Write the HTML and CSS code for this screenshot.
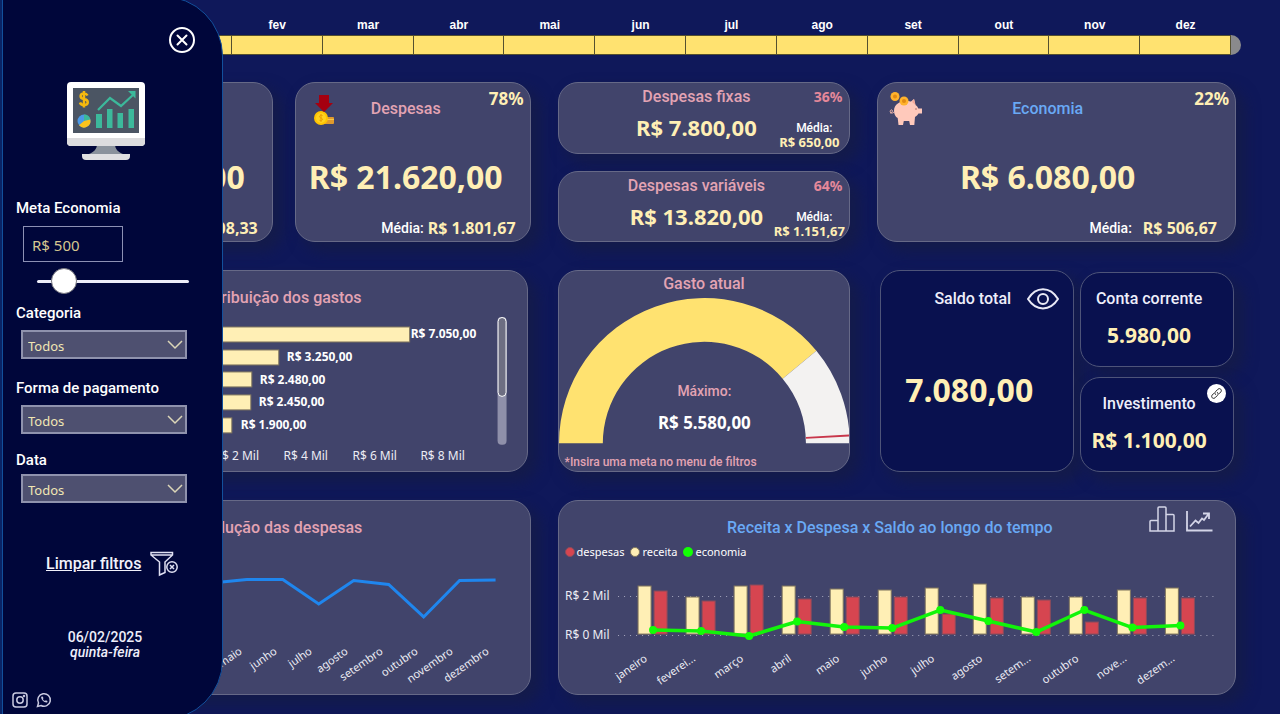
FILE: index.html
```html
<!DOCTYPE html>
<html lang="pt-BR">
<head>
<meta charset="utf-8">
<meta name="viewport" content="width=device-width, initial-scale=1">
<title>Controle financeiro</title>
<link rel="stylesheet" href="styles.css">
</head>
<body>
<div class="page">
  <header class="timeline">
    <ol class="months">
      <li><span>jan</span></li><li><span>fev</span></li><li><span>mar</span></li><li><span>abr</span></li>
      <li><span>mai</span></li><li><span>jun</span></li><li><span>jul</span></li><li><span>ago</span></li>
      <li><span>set</span></li><li><span>out</span></li><li><span>nov</span></li><li><span>dez</span></li>
    </ol>
    <div class="timeline-cap"></div>
  </header>

  <main class="board">
    <div class="pair">
      <section class="card kpi">
        <div class="kpi-head"><span></span><h2 class="title title-blue">Receita</h2></div>
        <p class="kpi-value">R$ 27.700,00</p>
        <p class="kpi-foot"><span>Média:</span><strong>R$ 2.308,33</strong></p>
      </section>
      <section class="card kpi">
        <div class="kpi-head">
          <svg class="kpi-icon" width="24" height="34" viewBox="0 0 24 34" aria-hidden="true">
            <rect x="10" y="25" width="12" height="7" rx="1" fill="#e09a2c"/>
            <rect x="10" y="27" width="12" height="1" fill="#f7c948"/>
            <circle cx="9" cy="26" r="7" fill="#ffc400"/>
            <circle cx="9" cy="26" r="5" fill="#ffd21f"/>
            <path d="M10.500 23.500c-3-1-4 1.800-1.500 2.500s1.500 3.300-1.500 2.300M9 22v8" stroke="#eb9d00" fill="none"/>
            <path d="M7 3h10v8h4l-9 9-9-9h4z" fill="#a50010"/>
          </svg>
          <h2 class="title">Despesas</h2>
        </div>
        <span class="kpi-share">78%</span>
        <p class="kpi-value">R$ 21.620,00</p>
        <p class="kpi-foot"><span>Média:</span><strong>R$ 1.801,67</strong></p>
      </section>
    </div>

    <div class="stack">
      <section class="card mini">
        <div class="mini-main"><h2 class="title">Despesas fixas</h2><p class="mini-value">R$ 7.800,00</p></div>
        <div class="mini-side"><span class="mini-share">36%</span><span class="mini-label">Média:</span><strong>R$ 650,00</strong></div>
      </section>
      <section class="card mini">
        <div class="mini-main"><h2 class="title">Despesas variáveis</h2><p class="mini-value">R$ 13.820,00</p></div>
        <div class="mini-side"><span class="mini-share">64%</span><span class="mini-label">Média:</span><strong>R$ 1.151,67</strong></div>
      </section>
    </div>

    <section class="card kpi kpi-wide">
      <div class="kpi-head">
        <svg class="kpi-icon" width="36" height="36" viewBox="0 0 36 36" aria-hidden="true">
          <path d="M6 21c-3 3-5-1-3-2s2 3-1 3" stroke="#f5b9aa" fill="none"/>
          <path d="M6 20c0-7 6-10 13-10 2 0 3 .3 4 .6L26 8l1.500 6c1.500 1 2.200 2 2.800 3.500H34v5h-3.500c-.8 1.500-2 2.700-3.500 3.500l-.7 8H22l-.8-4h-5.400l-.8 4h-4.500l-.8-7C7.500 26 6 23 6 20z" fill="#ffc9bb"/>
          <path d="M24 11l2-3 1.500 6z" fill="#f5aa99"/>
          <circle cx="28" cy="18" r="1" fill="#c98f86"/>
          <circle cx="7" cy="5.500" r="4.500" fill="#ffb32c"/><circle cx="7" cy="5.500" r="2" fill="#e18a13"/>
          <circle cx="16" cy="10" r="4.500" fill="#ffb32c"/><circle cx="16" cy="10" r="2" fill="#e18a13"/>
        </svg>
        <h2 class="title title-blue">Economia</h2>
      </div>
      <span class="kpi-share">22%</span>
      <p class="kpi-value">R$ 6.080,00</p>
      <p class="kpi-foot"><span>Média:</span><strong>R$ 506,67</strong></p>
    </section>

    <section class="card chart chart-left">
      <h2 class="title chart-title">Distribuição dos gastos</h2>
      <svg class="plot" viewBox="38 311 489 160" role="img" aria-label="Distribuição dos gastos">
        <g class="bar-cream">
          <rect x="167" y="327" width="243" height="15"/>
          <rect x="167" y="350" width="112" height="15"/>
          <rect x="167" y="372" width="85" height="15"/>
          <rect x="167" y="395" width="84" height="15"/>
          <rect x="167" y="418" width="65" height="15"/>
        </g>
        <g class="data-label">
          <text x="411" y="338">R$ 7.050,00</text>
          <text x="287" y="361">R$ 3.250,00</text>
          <text x="260" y="384">R$ 2.480,00</text>
          <text x="259" y="406">R$ 2.450,00</text>
          <text x="241" y="429">R$ 1.900,00</text>
        </g>
        <g class="axis axis-mid">
          <text x="237" y="460">R$ 2 Mil</text>
          <text x="306" y="460">R$ 4 Mil</text>
          <text x="375" y="460">R$ 6 Mil</text>
          <text x="443" y="460">R$ 8 Mil</text>
        </g>
        <rect x="498" y="317" width="9" height="128" rx="4" fill="#8f90aa"/>
        <rect x="498.500" y="317.500" width="8" height="79" rx="4" fill="#6d6e82" stroke="#fff"/>
      </svg>
    </section>

    <section class="card chart">
      <h2 class="title gauge-title">Gasto atual</h2>
      <svg class="plot" viewBox="558 297 292 150" role="img" aria-label="Gasto atual">
        <path d="M558 444A146 146 0 0 1 816.500 351L782.600 379A102 102 0 0 0 602 444z" fill="#ffe270"/>
        <path d="M816.500 351A146 146 0 0 1 850 444H806A102 102 0 0 0 782.600 379z" fill="#f3f2f1"/>
        <path d="M806 438.500L849.500 436" stroke="#c8374b" stroke-width="2"/>
        <text class="gauge-label" x="704" y="396">Máximo:</text>
        <text class="gauge-value" x="704" y="430">R$ 5.580,00</text>
      </svg>
      <p class="gauge-note">*Insira uma meta no menu de filtros</p>
    </section>

    <div class="balances">
      <section class="card dark">
        <div class="balance-head">
          <h2 class="title title-white">Saldo total</h2>
          <button class="icon-btn" type="button" aria-label="Mostrar ou ocultar saldo">
            <svg width="32" height="22" viewBox="0 0 32 22" fill="none" stroke="#e9e9f6" stroke-width="2"><path d="M1 11C9-2 23-2 31 11 23 23.500 9 23.500 1 11z"/><circle cx="16" cy="11" r="5"/></svg>
          </button>
        </div>
        <p class="kpi-value balance-total">7.080,00</p>
      </section>
      <div class="accounts">
        <section class="card dark account">
          <h2 class="title title-white">Conta corrente</h2>
          <p class="account-value">5.980,00</p>
        </section>
        <section class="card dark account">
          <h2 class="title title-white">Investimento</h2>
          <p class="account-value">R$ 1.100,00</p>
          <a class="link-badge" href="#investimento" aria-label="Abrir investimento">
            <svg width="13" height="13" viewBox="0 0 13 13" fill="none" stroke="#222" stroke-linecap="round"><path d="M5.500 7.500c-1-1-.8-2 0-2.800L8 2.200c1.800-1.700 4.500.8 2.800 2.700L9.300 6.500M7.500 5.500c1 1 .8 2 0 2.800L5 10.800C3.200 12.500.5 10 2.200 8.100L3.700 6.500"/></svg>
          </a>
        </section>
      </div>
    </div>

    <section class="card chart">
      <h2 class="title chart-title">Evolução das despesas</h2>
      <svg class="plot" viewBox="38 541 492 152" role="img" aria-label="Evolução das despesas">
        <polyline points="176,587 212,583 247,579.500 283,579.500 319,604 354,580.500 389,584.500 424,617 460,580.500 496,580" fill="none" stroke="#1f86ee" stroke-width="3"/>
        <g class="axis axis-tilted">
          <text transform="translate(243 653) rotate(-35)">maio</text>
          <text transform="translate(278 653) rotate(-35)">junho</text>
          <text transform="translate(313 653) rotate(-35)">julho</text>
          <text transform="translate(349 653) rotate(-35)">agosto</text>
          <text transform="translate(384 653) rotate(-35)">setembro</text>
          <text transform="translate(419 653) rotate(-35)">outubro</text>
          <text transform="translate(454 653) rotate(-35)">novembro</text>
          <text transform="translate(490 653) rotate(-35)">dezembro</text>
        </g>
      </svg>
    </section>

    <section class="card chart chart-wide">
      <div class="wide-head">
        <h2 class="title title-blue">Receita x Despesa x Saldo ao longo do tempo</h2>
        <div class="wide-tools">
          <button class="icon-btn" type="button" aria-label="Ver em colunas">
            <svg width="26" height="26" viewBox="0 0 26 26" fill="none" stroke="#d4d5e8" stroke-width="1.500"><path d="M1 25V15.500q0-1 1-1h7V25zM9 25V2q0-1 1-1h6q1 0 1 1v23zM17 8.500h7q1 0 1 1V25h-8z"/></svg>
          </button>
          <button class="icon-btn" type="button" aria-label="Ver em linhas">
            <svg width="27" height="22" viewBox="0 0 27 22" fill="none" stroke="#d4d5e8" stroke-width="1.800"><path d="M1 1v19.500h25.500M4 16.500l5.500-6 3 2.500 3.500-4.500 2 1.500L22.500 4M17 3.500h6V9"/></svg>
          </button>
        </div>
      </div>
      <ul class="legend">
        <li><i class="dot dot-red"></i>despesas</li>
        <li><i class="dot dot-cream"></i>receita</li>
        <li><i class="dot dot-green"></i>economia</li>
      </ul>
      <svg class="plot" viewBox="559 563 676 128" role="img" aria-label="Receita, despesa e saldo por mês">
        <path d="M618 596.500H1215M618 635.500H1215" stroke="#a5a6bd" stroke-dasharray="1 5"/>
        <g class="axis">
          <text x="565" y="600">R$ 2 Mil</text>
          <text x="565" y="639">R$ 0 Mil</text>
        </g>
        <g class="bar-cream">
          <rect x="638" y="586" width="13" height="48"/><rect x="686" y="597" width="13" height="37"/>
          <rect x="734" y="586" width="13" height="48"/><rect x="782" y="586" width="13" height="48"/>
          <rect x="830" y="589" width="13" height="45"/><rect x="878" y="590" width="13" height="44"/>
          <rect x="925" y="588" width="13" height="46"/><rect x="973" y="584" width="13" height="50"/>
          <rect x="1021" y="597" width="13" height="37"/><rect x="1069" y="597" width="13" height="37"/>
          <rect x="1117" y="590" width="13" height="44"/><rect x="1165" y="588" width="13" height="46"/>
        </g>
        <g class="bar-red">
          <rect x="654" y="591" width="13" height="43"/><rect x="702" y="601" width="13" height="33"/>
          <rect x="750" y="585" width="13" height="49"/><rect x="798" y="599" width="13" height="35"/>
          <rect x="846" y="597" width="13" height="37"/><rect x="894" y="597" width="13" height="37"/>
          <rect x="942" y="614" width="13" height="20"/><rect x="990" y="598" width="13" height="36"/>
          <rect x="1037" y="600" width="13" height="34"/><rect x="1085" y="622" width="13" height="12"/>
          <rect x="1133" y="598" width="13" height="36"/><rect x="1181" y="598" width="13" height="36"/>
        </g>
        <polyline points="653,630 701,631 749,636 797,621.500 844,627 892,628 940,610 988,621 1036,632 1084,610 1132,627.500 1180,625.500" fill="none" stroke="#12f40a" stroke-width="3.500" stroke-linejoin="round"/>
        <g fill="#12ff05">
          <circle cx="653" cy="630" r="4"/><circle cx="701" cy="631" r="4"/><circle cx="749" cy="636" r="4"/>
          <circle cx="797" cy="621.500" r="4"/><circle cx="844" cy="627" r="4"/><circle cx="892" cy="628" r="4"/>
          <circle cx="940" cy="610" r="4"/><circle cx="988" cy="621" r="4"/><circle cx="1036" cy="632" r="4"/>
          <circle cx="1084" cy="610" r="4"/><circle cx="1132" cy="627.500" r="4"/><circle cx="1180" cy="625.500" r="4"/>
        </g>
        <g class="axis axis-tilted">
          <text transform="translate(648 660) rotate(-35)">janeiro</text>
          <text transform="translate(696 660) rotate(-35)">feverei...</text>
          <text transform="translate(744 660) rotate(-35)">março</text>
          <text transform="translate(792 660) rotate(-35)">abril</text>
          <text transform="translate(840 660) rotate(-35)">maio</text>
          <text transform="translate(888 660) rotate(-35)">junho</text>
          <text transform="translate(935 660) rotate(-35)">julho</text>
          <text transform="translate(983 660) rotate(-35)">agosto</text>
          <text transform="translate(1031 660) rotate(-35)">setem...</text>
          <text transform="translate(1079 660) rotate(-35)">outubro</text>
          <text transform="translate(1127 660) rotate(-35)">nove...</text>
          <text transform="translate(1175 660) rotate(-35)">dezem...</text>
        </g>
      </svg>
    </section>
  </main>

  <aside class="drawer">
    <button class="icon-btn drawer-close" type="button" aria-label="Fechar filtros">
      <svg width="28" height="28" viewBox="0 0 28 28" fill="none" stroke="#fff" stroke-width="2" stroke-linecap="round"><circle cx="14" cy="14" r="12"/><path d="M9.500 9.500l9 9M18.500 9.500l-9 9"/></svg>
    </button>
    <svg class="drawer-logo" width="78" height="78" viewBox="0 0 78 78" aria-hidden="true">
      <path d="M30 62h18c0 5 3 8 8 10H22c5-2 8-5 8-10z" fill="#8a929c"/>
      <path d="M15 72h48v2q0 4-4 4H19q-4 0-4-4z" fill="#dfdfe1"/>
      <rect x="0" y="0" width="78" height="64" rx="4" fill="#fff"/>
      <path d="M0 56h78v4q0 4-4 4H4q-4 0-4-4z" fill="#dcdcde"/>
      <rect x="6" y="6" width="66" height="45" fill="#4b5563"/>
      <path d="M20.500 13.500q-1-2-3.500-2c-4.500 0-4.500 5 0 5.500 5 .6 5 6 0 6q-3.200 0-4-2.500M17 9v16.500" stroke="#f6b90e" stroke-width="2.500" fill="none"/>
      <circle cx="17" cy="39" r="6.500" fill="#4b9ae8"/>
      <path d="M17 39V32.500A6.500 6.500 0 0 1 23.300 37.500z" fill="#3cb99b"/>
      <path d="M17 39l6.300-1.500A6.500 6.500 0 0 1 12 43.200z" fill="#fbc31c"/>
      <path d="M31 28l12-12 11 8 13-12" stroke="#3cb99b" stroke-width="2.200" fill="none"/>
      <path d="M61 9h7.500v7.500z" fill="#3cb99b"/>
      <path d="M29 32h6v14h-6zM40 27h5.500v19H40zM50.500 31h5.500v15h-5.500zM61.500 27h5.500v19h-5.500z" fill="#3cb99b"/>
    </svg>

    <div class="field field-goal">
      <label for="goal">Meta Economia</label>
      <input class="goal" id="goal" type="text" value="R$ 500">
      <input class="slider" type="range" min="0" max="4500" step="100" value="500" aria-label="Meta de economia">
    </div>
    <div class="field field-category">
      <label for="category">Categoria</label>
      <div class="select-wrap">
        <select id="category"><option>Todos</option></select>
        <svg width="16" height="10" viewBox="0 0 16 10" fill="none" stroke="#dcd6b8" stroke-width="1.500"><path d="M1 1l7 7 7-7"/></svg>
      </div>
    </div>
    <div class="field">
      <label for="payment">Forma de pagamento</label>
      <div class="select-wrap">
        <select id="payment"><option>Todos</option></select>
        <svg width="16" height="10" viewBox="0 0 16 10" fill="none" stroke="#dcd6b8" stroke-width="1.500"><path d="M1 1l7 7 7-7"/></svg>
      </div>
    </div>
    <div class="field field-date">
      <label for="date">Data</label>
      <div class="select-wrap">
        <select id="date"><option>Todos</option></select>
        <svg width="16" height="10" viewBox="0 0 16 10" fill="none" stroke="#dcd6b8" stroke-width="1.500"><path d="M1 1l7 7 7-7"/></svg>
      </div>
    </div>

    <a class="clear" href="#limpar">
      <span>Limpar filtros</span>
      <svg width="28" height="26" viewBox="0 0 28 26" fill="none" stroke="#dfe0f2" stroke-width="1.500"><path d="M1 1.500h21.500v2.500L15 11v10.500L9.500 24V11L1 4zM1 4h21.500"/><circle cx="22" cy="16" r="5.200" fill="#00063a"/><path d="M20 14l4 4M24 14l-4 4"/></svg>
    </a>
    <p class="today">06/02/2025<br><em>quinta-feira</em></p>

    <nav class="social">
      <a href="#instagram" aria-label="Instagram"><svg width="16" height="16" viewBox="0 0 16 16" fill="none" stroke="#c9cae0" stroke-width="1.500"><rect x="1" y="1" width="14" height="14" rx="3"/><circle cx="8" cy="8" r="3.200"/><circle cx="12" cy="4" r=".5"/></svg></a>
      <a href="#whatsapp" aria-label="WhatsApp"><svg width="16" height="16" viewBox="0 0 16 16" fill="none" stroke="#c9cae0" stroke-width="1.500"><path d="M1.500 14.500l1-3.500A6.300 6.300 0 1 1 5 13.500z"/><path d="M5.200 4.800c-.6 2.500 3.300 6.500 6 5.600l.3-1.300-1.700-.8-.8.8C7.900 8.700 7.200 8 6.800 7l.7-.8-.8-1.700z" fill="#c9cae0" stroke="none"/></svg></a>
    </nav>
  </aside>
</div>
</body>
</html>
```
FILE: styles.css
```css
*, *::before, *::after { box-sizing: border-box; }

body, h2, p, ol, ul { margin: 0; padding: 0; }

ol, ul { list-style: none; }

body {
  background: #0f185a;
  color: #fff;
  font-family: "Noto Sans", "Open Sans", sans-serif;
  font-size: 12px;
}

.page {
  position: relative;
  display: flex;
  flex-direction: column;
  min-height: 100vh;
  overflow: hidden;
}

/* Month timeline */
.timeline {
  display: flex;
  align-items: flex-end;
  padding: 15px 39px 0 141px;
}

.months {
  flex: 1;
  display: grid;
  grid-template-columns: repeat(12, 1fr);
  font: bold 12px/20px "Liberation Sans", Arial, sans-serif;
  text-align: center;
}

.months li::after {
  content: "";
  display: block;
  height: 20px;
  background: #ffe270;
  border: solid #55502f;
  border-width: 1px 1px 1px 0;
}

.timeline-cap {
  width: 10px;
  height: 20px;
  background: #8a8a8c;
  border-radius: 0 10px 10px 0;
}

/* Dashboard grid */
.board {
  flex: 1;
  display: grid;
  grid-template-columns: 494fr 293fr 359fr;
  grid-template-rows: 160fr 202fr 195fr;
  gap: 28px 27px;
  padding: 27px 44px 19px 37px;
}

.pair {
  display: grid;
  grid-template-columns: 1fr 1fr;
  gap: 22px;
}

.stack {
  display: grid;
  grid-template-rows: 1fr 1fr;
  gap: 17px;
}

.card {
  position: relative;
  min-width: 0;
  background: #41446b;
  border: 1px solid #666987;
  border-radius: 20px;
  box-shadow: 8px 8px 14px 2px #141b4b;
}

.title {
  color: #e3a3b3;
  font: 500 16px/20px Roboto, "Noto Sans", sans-serif;
  text-align: center;
}

.title-blue { color: #69a9f5; }
.title-white { color: #eeeefa; }

/* Indicator cards */
.kpi {
  display: flex;
  flex-direction: column;
  padding-right: 14px;
}

.kpi-head {
  display: grid;
  grid-template-columns: 56px 1fr 56px;
  align-items: center;
  height: 52px;
}

.kpi-icon { justify-self: center; }

.kpi-share {
  position: absolute;
  top: 6px;
  right: 6px;
  color: #ffefb5;
  font-size: 17px;
  font-weight: bold;
  line-height: 20px;
}

.kpi-value {
  flex: 1;
  display: flex;
  align-items: center;
  justify-content: center;
  color: #ffefb5;
  font-size: 32px;
  font-weight: bold;
  line-height: 36px;
  white-space: nowrap;
}

.kpi-foot {
  display: flex;
  justify-content: flex-end;
  align-items: center;
  gap: 4px;
  padding-bottom: 4px;
  font: 500 14px/18px Roboto, sans-serif;
}

.kpi-foot strong {
  color: #ffefb5;
  font: bold 16px/18px "Noto Sans", sans-serif;
}

.kpi-wide { padding-right: 18px; }
.kpi-wide .kpi-foot { gap: 11px; }

.mini {
  display: grid;
  grid-template-columns: 1fr 78px;
  padding: 4px 1px 0 64px;
}

.mini-main { text-align: center; }

.mini-value {
  color: #ffefb5;
  font-size: 22px;
  font-weight: bold;
  line-height: 40px;
  white-space: nowrap;
}

.mini-side {
  display: flex;
  flex-direction: column;
  align-items: center;
  font-size: 13px;
  line-height: 14px;
  white-space: nowrap;
}

.mini-side strong { color: #ffefb5; }

.mini-share {
  align-self: flex-end;
  margin-bottom: 14px;
  padding-right: 6px;
  color: #e5889a;
  font-size: 14px;
  font-weight: bold;
  line-height: 20px;
}

.mini-label {
  padding-left: 10px;
  font: 500 12px/14px Roboto, sans-serif;
}

/* Charts */
.chart {
  display: flex;
  flex-direction: column;
}

.chart-left { margin-right: 3px; }
.chart-wide { grid-column: span 2; }

.chart-title {
  height: 40px;
  padding: 17px 10px 0 0;
}

.plot {
  display: block;
  width: 100%;
  font-family: "Noto Sans", sans-serif;
}

.bar-cream { fill: #ffefb5; stroke: #80765f; }
.bar-red { fill: #d64550; stroke: #8a4c5c; }

.data-label {
  fill: #fff;
  font-size: 12px;
  font-weight: bold;
}

.axis {
  fill: #ececf4;
  font-size: 12px;
}

.axis-mid { text-anchor: middle; }

.axis-tilted {
  font-size: 11px;
  text-anchor: end;
}

.gauge-title {
  height: 26px;
  padding-top: 3px;
}

.gauge-label {
  fill: #e3a3b3;
  font: 500 14px Roboto, sans-serif;
  text-anchor: middle;
}

.gauge-value {
  fill: #fff;
  font-size: 17px;
  font-weight: bold;
  text-anchor: middle;
}

.gauge-note {
  margin-top: 8px;
  padding-left: 6px;
  color: #e3a3b3;
  font: 500 12px/16px Roboto, sans-serif;
}

.wide-head {
  display: grid;
  grid-template-columns: 80px 1fr 94px;
  height: 40px;
}

.wide-head .title {
  grid-column: 2;
  padding-top: 17px;
}

.wide-tools {
  display: flex;
  align-items: flex-end;
  gap: 11px;
  padding: 0 0 9px 8px;
}

.legend {
  display: flex;
  gap: 6px;
  padding-left: 6px;
  font-size: 11px;
  line-height: 22px;
}

.legend li {
  display: flex;
  align-items: center;
  gap: 2px;
}

.dot {
  width: 10px;
  height: 10px;
  border-radius: 50%;
}

.dot-red { background: #d64550; border: 1px solid #8a4c5c; }
.dot-cream { background: #ffefb5; border: 1px solid #80765f; }
.dot-green { background: #12ff05; }

/* Balances */
.balances {
  display: grid;
  grid-template-columns: 194fr 154fr;
  gap: 6px;
  padding: 0 2px 0 3px;
}

.dark {
  background: #09114f;
  border-color: #4e5479;
}

.balance-head {
  display: flex;
  align-items: center;
  justify-content: flex-end;
  gap: 16px;
  padding: 17px 14px 0 0;
}

.balance-total {
  padding: 62px 16px 0 0;
}

.accounts {
  display: grid;
  grid-template-rows: 1fr 1fr;
  gap: 10px;
  padding: 2px 0 0;
}

.account {
  padding: 16px 16px 0 0;
  text-align: center;
}

.account-value {
  padding-top: 6px;
  color: #ffefb5;
  font-size: 21px;
  font-weight: bold;
  line-height: 40px;
  white-space: nowrap;
}

.link-badge {
  position: absolute;
  top: 6px;
  right: 7px;
  display: grid;
  place-items: center;
  width: 19px;
  height: 19px;
  background: #fff;
  border-radius: 50%;
}

.icon-btn {
  display: block;
  padding: 0;
  border: 0;
  background: none;
  cursor: pointer;
}

.icon-btn svg { display: block; }

/* Filter drawer laid over the dashboard */
.drawer {
  position: absolute;
  top: -4px;
  bottom: -6px;
  left: 2px;
  width: 221px;
  display: flex;
  flex-direction: column;
  padding: 29px 34px 11px 13px;
  background: #00063a;
  border: 1px solid #12509c;
  border-radius: 0 60px 60px 0;
  box-shadow: -3px 0 0 #0a2466;
}

.drawer-close {
  align-self: flex-end;
  margin-right: -8px;
}

.drawer-logo {
  margin: 28px 0 38px 51px;
}

.field {
  display: flex;
  flex-direction: column;
  margin-bottom: 16px;
}

.field label {
  margin-bottom: 7px;
  font: 500 15px/20px Roboto, sans-serif;
}

.goal {
  width: 100px;
  height: 36px;
  margin: 1px 0 5px 7px;
  padding: 2px 8px 0;
  background: transparent;
  border: 1px solid #8c90b4;
  color: #d6c690;
  font: 15px "Noto Sans", sans-serif;
}

.slider {
  appearance: none;
  width: 152px;
  height: 28px;
  margin: 0 0 0 21px;
  background: transparent;
}

.slider::-webkit-slider-runnable-track {
  height: 3px;
  background: #eeeefa;
  border-radius: 2px;
}

.slider::-webkit-slider-thumb {
  appearance: none;
  width: 26px;
  height: 26px;
  margin-top: -12px;
  background: #fff;
  border: 1px solid #77777f;
  border-radius: 50%;
}

.select-wrap {
  position: relative;
  width: 166px;
  margin-left: 5px;
}

.select-wrap select {
  appearance: none;
  display: block;
  width: 100%;
  height: 29px;
  padding: 2px 24px 0 5px;
  background: #4e5070;
  border: 2px solid #8f92ad;
  border-radius: 0;
  color: #f1e6b4;
  font: 13px "Noto Sans", sans-serif;
}

.select-wrap svg {
  position: absolute;
  top: 10px;
  right: 4px;
  pointer-events: none;
}

.field-goal { margin-bottom: 8px; }
.field-category { margin-bottom: 19px; }
.field-date label { margin-bottom: 4px; }

.clear {
  display: flex;
  align-items: center;
  gap: 9px;
  margin: 32px 0 0 30px;
  color: #f2f2fb;
  font: 500 16px/24px Roboto, sans-serif;
}

.clear svg { flex: none; }

.today {
  margin-top: 53px;
  padding-left: 6px;
  color: #eeeefa;
  font: 500 14px/15px Roboto, sans-serif;
  text-align: center;
}

.social {
  display: flex;
  gap: 8px;
  margin: auto 0 0 -4px;
}

.social svg { display: block; }
```
